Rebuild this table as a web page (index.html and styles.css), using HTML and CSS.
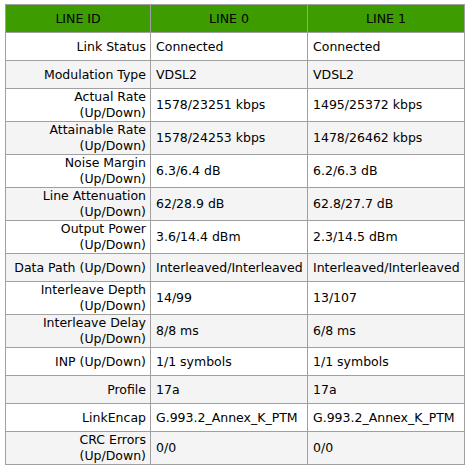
FILE: index.html
```html
<!DOCTYPE html>
<html>
<head>
<meta charset="utf-8">
<link rel="stylesheet" href="styles.css">
</head>
<body>
<table class="status">
  <colgroup><col class="c-label"><col class="c-val"><col class="c-val"></colgroup>
  <thead>
    <tr class="head"><th>LINE ID</th><th>LINE 0</th><th>LINE 1</th></tr>
  </thead>
  <tbody>
    <tr class="one"><td class="lbl">Link Status</td><td>Connected</td><td>Connected</td></tr>
    <tr class="one alt"><td class="lbl">Modulation Type</td><td>VDSL2</td><td>VDSL2</td></tr>
    <tr class="two"><td class="lbl">Actual Rate<br>(Up/Down)</td><td>1578/23251 kbps</td><td>1495/25372 kbps</td></tr>
    <tr class="two alt"><td class="lbl">Attainable Rate<br>(Up/Down)</td><td>1578/24253 kbps</td><td>1478/26462 kbps</td></tr>
    <tr class="two"><td class="lbl">Noise Margin<br>(Up/Down)</td><td>6.3/6.4 dB</td><td>6.2/6.3 dB</td></tr>
    <tr class="two alt"><td class="lbl">Line Attenuation<br>(Up/Down)</td><td>62/28.9 dB</td><td>62.8/27.7 dB</td></tr>
    <tr class="two"><td class="lbl">Output Power<br>(Up/Down)</td><td>3.6/14.4 dBm</td><td>2.3/14.5 dBm</td></tr>
    <tr class="one alt"><td class="lbl">Data Path (Up/Down)</td><td>Interleaved/Interleaved</td><td>Interleaved/Interleaved</td></tr>
    <tr class="two"><td class="lbl">Interleave Depth<br>(Up/Down)</td><td>14/99</td><td>13/107</td></tr>
    <tr class="two alt"><td class="lbl">Interleave Delay<br>(Up/Down)</td><td>8/8 ms</td><td>6/8 ms</td></tr>
    <tr class="one"><td class="lbl">INP (Up/Down)</td><td>1/1 symbols</td><td>1/1 symbols</td></tr>
    <tr class="one alt"><td class="lbl">Profile</td><td>17a</td><td>17a</td></tr>
    <tr class="one"><td class="lbl">LinkEncap</td><td>G.993.2_Annex_K_PTM</td><td>G.993.2_Annex_K_PTM</td></tr>
    <tr class="two alt"><td class="lbl">CRC Errors<br>(Up/Down)</td><td>0/0</td><td>0/0</td></tr>
  </tbody>
</table>
</body>
</html>
```
FILE: styles.css
```css
html, body {
  margin: 0;
  padding: 0;
  background: #ffffff;
}
body {
  padding: 4px 0 0 5px;
}
.status {
  border-collapse: collapse;
  table-layout: fixed;
  width: 460px;
  font-family: "DejaVu Sans", Verdana, sans-serif;
  font-size: 12.5px;
  color: #000;
}
.c-label { width: 145px; }
.c-val { width: 157px; }
.status th,
.status td {
  border: 1px solid #a0a0a0;
  padding: 0 4px;
  line-height: 16px;
  vertical-align: middle;
  white-space: nowrap;
  overflow: visible;
}
.status th {
  background: #3c9c00;
  font-weight: normal;
  text-align: center;
  height: 27px;
}
.status td { text-align: left; padding-left: 5px; }
.status td.lbl { text-align: right; padding-right: 4px; }
.one td { height: 27px; }
.two td { height: 32px; }
.alt td { background: #f4f4f4; }
```
